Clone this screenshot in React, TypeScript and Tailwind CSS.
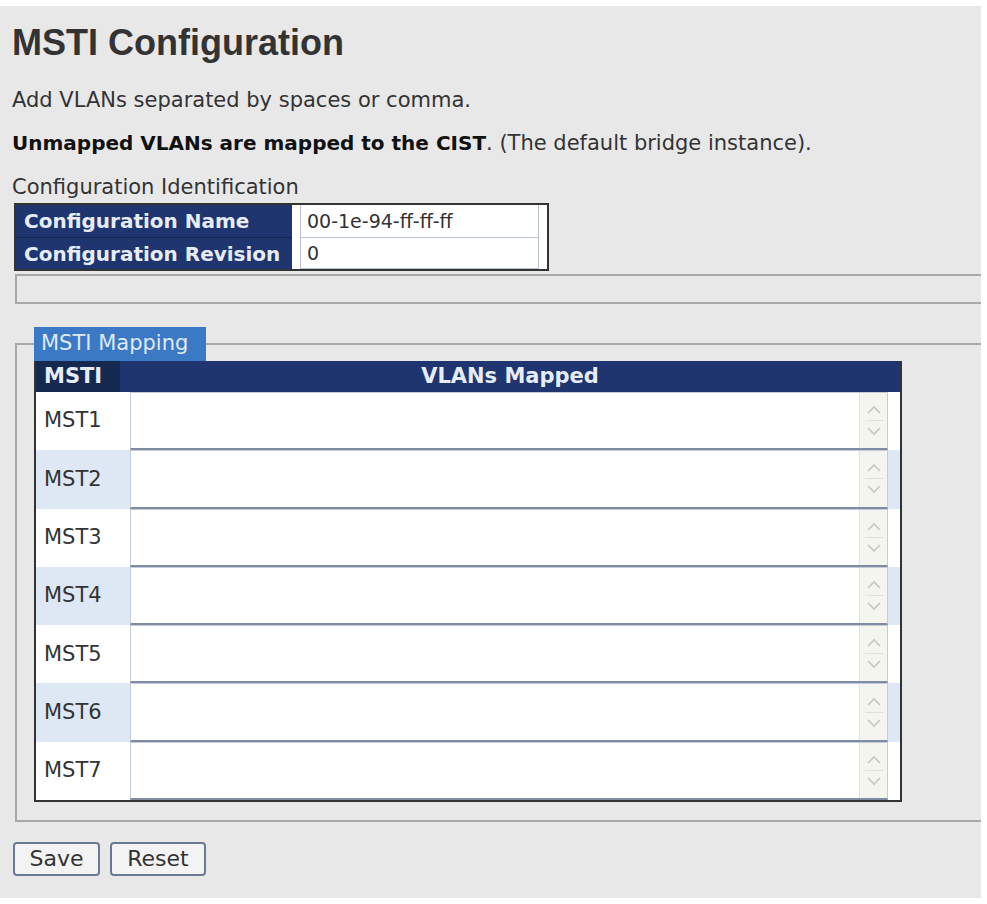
const font = { fontFamily: '"DejaVu Sans", Verdana, sans-serif' };

const rows = ['MST1', 'MST2', 'MST3', 'MST4', 'MST5', 'MST6', 'MST7'];

function Spinner() {
  return (
    <div className="w-[28px] h-full bg-[#f4f5ef] border-l border-[#e2e4dc] flex flex-col items-center justify-center gap-[5px] text-[#c5c9be]">
      <svg width="16" height="11" viewBox="0 0 16 11" fill="none" stroke="currentColor" strokeWidth="1.7">
        <path d="M2 9 L8 3 L14 9" />
      </svg>
      <div className="w-[18px] h-px bg-[#dfe2d8]" />
      <svg width="16" height="11" viewBox="0 0 16 11" fill="none" stroke="currentColor" strokeWidth="1.7">
        <path d="M2 2 L8 8 L14 2" />
      </svg>
    </div>
  );
}

export default function App() {
  return (
    <div className="min-h-screen bg-white pt-[6px]" style={font}>
      <div className="w-[981px] h-[892px] bg-[#e8e8e8] pl-[12px] pt-[17px] text-[#333]">
        <h1
          className="text-[36px] font-bold leading-[40px] text-[#333]"
          style={{ fontFamily: '"Liberation Sans", Arial, sans-serif' }}
        >
          MSTI Configuration
        </h1>
        <p className="mt-[25px] text-[21px] leading-[24px]">Add VLANs separated by spaces or comma.</p>
        <p className="mt-[19px] text-[21px] leading-[24px]">
          <b className="text-[#111] text-[20px]">Unmapped VLANs are mapped to the CIST</b>. (The default bridge instance).
        </p>
        <p className="mt-[20px] text-[21px] leading-[24px]">Configuration Identification</p>

        {/* Configuration identification table */}
        <div className="mt-[4px] ml-[2px] w-[535px] border-2 border-[#333] bg-white flex">
          <div className="w-[276px] bg-[#1e3570] text-[#e6ecf8] font-bold text-[20px]">
            <div className="h-[33px] flex items-center pl-[8px] border-b border-[#15264f]">Configuration Name</div>
            <div className="h-[31px] flex items-center pl-[8px]">Configuration Revision</div>
          </div>
          <div className="w-[8px]" />
          <div className="w-[239px] text-[19px]">
            <div className="h-[33px] flex items-center pl-[6px] border border-[#b7c2d4] border-t-0">00-1e-94-ff-ff-ff</div>
            <div className="h-[31px] flex items-center pl-[6px] border border-[#b7c2d4] border-t-0">0</div>
          </div>
        </div>

        {/* empty fieldset under identification */}
        <div className="ml-[3px] mt-[3px] h-[30px] border-t-2 border-l-2 border-b-2 border-[#a9a9a9]" />

        {/* MSTI mapping fieldset */}
        <div className="mt-[23px] relative">
          <div className="ml-[22px] w-[172px] h-[34px] bg-[#3b79c4] text-[#dfe9f8] text-[21px] flex items-center pl-[7px] relative z-10">
            MSTI Mapping
          </div>
          <div className="absolute left-[3px] right-0 top-[16px] h-[479px] border-t-2 border-l-2 border-b-2 border-[#a9a9a9]" />
          <div className="relative ml-[22px] w-[868px] border-2 border-t-0 border-[#333] bg-white">
            <div className="flex h-[31px] bg-[#1e3570] text-[#e6ecf8] font-bold text-[21px]">
              <div className="w-[84px] bg-[#15284f] flex items-center pl-[8px]">MSTI</div>
              <div className="flex-1 flex items-center justify-center">VLANs Mapped</div>
            </div>
            {rows.map((r, i) => (
              <div key={r} className={`flex h-[58.3px] ${i % 2 === 1 ? 'bg-[#dde8f4]' : 'bg-white'}`}>
                <div className="w-[94px] flex items-center pl-[8px] text-[21px] text-[#333]">{r}</div>
                <div className="w-[758px] flex bg-white border border-[#c4ccd8] border-b-2 border-b-[#7f8ca3]">
                  <div className="flex-1" />
                  <Spinner />
                </div>
              </div>
            ))}
          </div>
        </div>

        {/* buttons */}
        <div className="mt-[40px] ml-[1px] flex gap-[10px] text-[22px]">
          <button className="w-[87px] h-[34px] border-2 border-[#6b7a92] rounded-[4px] bg-[#f3f3f3] text-[#333] leading-none">Save</button>
          <button className="w-[96px] h-[34px] border-2 border-[#6b7a92] rounded-[4px] bg-[#f3f3f3] text-[#333] leading-none">Reset</button>
        </div>
      </div>
    </div>
  );
}
